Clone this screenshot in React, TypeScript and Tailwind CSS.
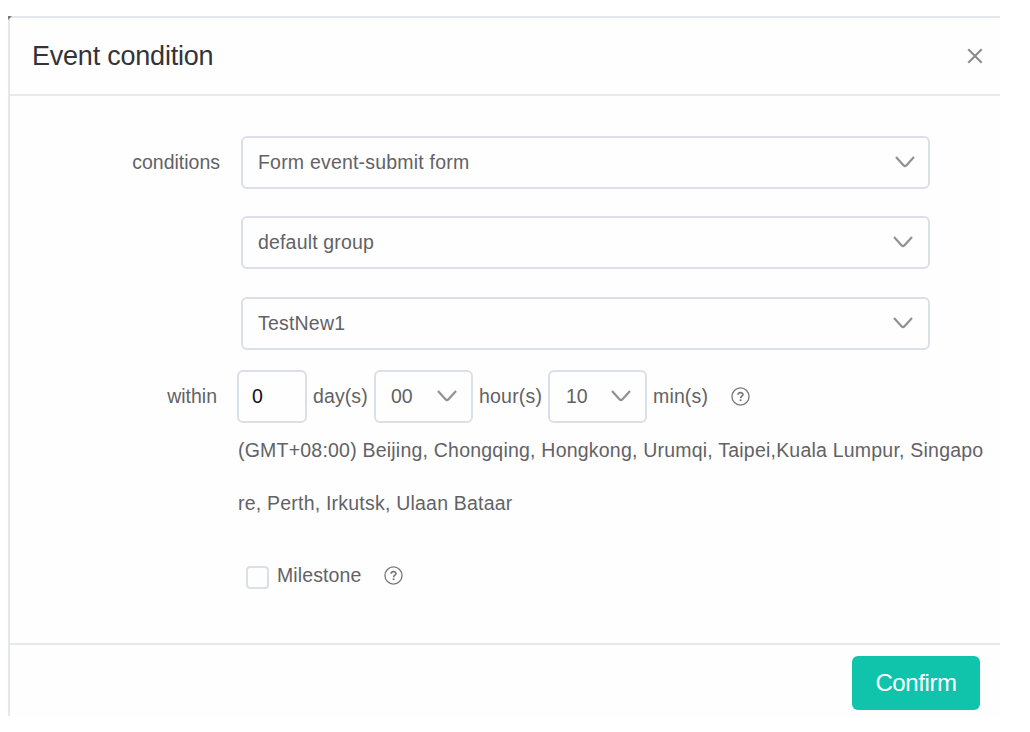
import type { ReactNode } from "react";

function Chevron() {
  return (
    <svg className="block h-3 w-5 shrink-0" viewBox="0 0 20 12" fill="none" stroke="#919195" strokeWidth="2.2">
      <path d="M1 1 L8.7 9.4 Q10 10.7 11.3 9.4 L19 1" />
    </svg>
  );
}

function Help() {
  return (
    <svg className="block size-[19px] shrink-0" viewBox="0 0 20 20" fill="none" stroke="#77777b" strokeWidth="1.4">
      <circle cx="10" cy="10" r="9" />
      <path d="M7.5 8.1 C7.6 5.2 12.7 5.2 12.6 8 C12.5 9.7 10.1 9.8 10.1 11.8" strokeWidth="1.7" />
      <path d="M10.1 13 V14.8" strokeWidth="1.9" />
    </svg>
  );
}

function Select({ children, className }: { children: ReactNode; className: string }) {
  return (
    <div className={`flex h-[53px] shrink-0 items-center justify-between rounded-md border-2 border-[#dbdfe8] pb-0.5 ${className}`}>
      <span className="pt-0.5">{children}</span>
      <Chevron />
    </div>
  );
}

export default function App() {
  return (
    <div className="h-[732px] w-[1030px] bg-white pl-2 pt-4 font-['Liberation_Sans',Arial,sans-serif] text-[19.5px] text-[#626266]">
      <div className="relative flex h-[700px] w-[992px] flex-col border-l-2 border-t-2 border-[#e4e8ed] bg-[#fefefe]">
        <i className="absolute -left-0.5 -top-0.5 size-1 bg-[#77797c] [clip-path:polygon(0_0,100%_0,0_100%)]" />
        <header className="flex h-[78px] shrink-0 items-center justify-between border-b-2 border-[#e6e9ee] pl-[22px] pr-[17px]">
          <h1 className="whitespace-nowrap text-[27px] leading-8 tracking-[-0.22px] text-[#333338]">Event condition</h1>
          <svg className="block size-4" viewBox="0 0 16 16" fill="none" stroke="#8c8c8c" strokeWidth="2.1">
            <path d="M1.3 1.3 L14.7 14.7 M14.7 1.3 L1.3 14.7" />
          </svg>
        </header>

        <main className="flex h-[547px] shrink-0 flex-col pt-10">
          <div className="flex">
            <span className="w-[210px] pt-3 text-right leading-7">conditions</span>
            <div className="ml-[21px] flex w-[689px] flex-col">
              <Select className="w-[689px] pl-[15px] pr-[13px] tracking-[0.2px]">Form event-submit form</Select>
              <Select className="mt-[27px] w-[689px] pl-[15px] pr-[15px] tracking-[0.17px]">default group</Select>
              <Select className="mt-7 w-[689px] pl-[15px] pr-[15px] tracking-[0.2px]">TestNew1</Select>
            </div>
          </div>

          <div className="mt-5 flex h-[53px] items-center whitespace-nowrap">
            <span className="w-[207px] text-right">within</span>
            <div className="ml-5 flex h-[53px] w-[70px] items-center rounded-md border-2 border-[#dbdfe8] pl-[13px] text-[#101014]">0</div>
            <span className="w-[67px] pl-[6px] tracking-[0.1px]">day(s)</span>
            <Select className="w-[99px] pl-[15px] pr-[14px]">00</Select>
            <span className="w-[75px] pl-[6px] tracking-[0.2px]">hour(s)</span>
            <Select className="w-[99px] pl-4 pr-[14px]">10</Select>
            <span className="w-[84px] pl-[6px] tracking-[0.15px]">min(s)</span>
            <Help />
          </div>

          <p className="ml-[228px] mt-px whitespace-nowrap leading-[53px] tracking-[0.215px]">
            (GMT+08:00) Beijing, Chongqing, Hongkong, Urumqi, Taipei,Kuala Lumpur, Singapo<br />
            re, Perth, Irkutsk, Ulaan Bataar
          </p>

          <div className="mt-[31px] flex items-center">
            <span className="ml-[236px] mt-[3px] size-[23px] rounded border-2 border-[#dbdfe8]" />
            <span className="ml-2 w-[107px] tracking-[0.1px]">Milestone</span>
            <Help />
          </div>
        </main>

        <footer className="flex justify-end border-t-2 border-[#e6e9ee] pr-5 pt-[11px]">
          <button className="h-[54px] w-32 rounded-md bg-[#10c3ab] text-[24px] tracking-[-0.4px] text-white">Confirm</button>
        </footer>
      </div>
    </div>
  );
}
